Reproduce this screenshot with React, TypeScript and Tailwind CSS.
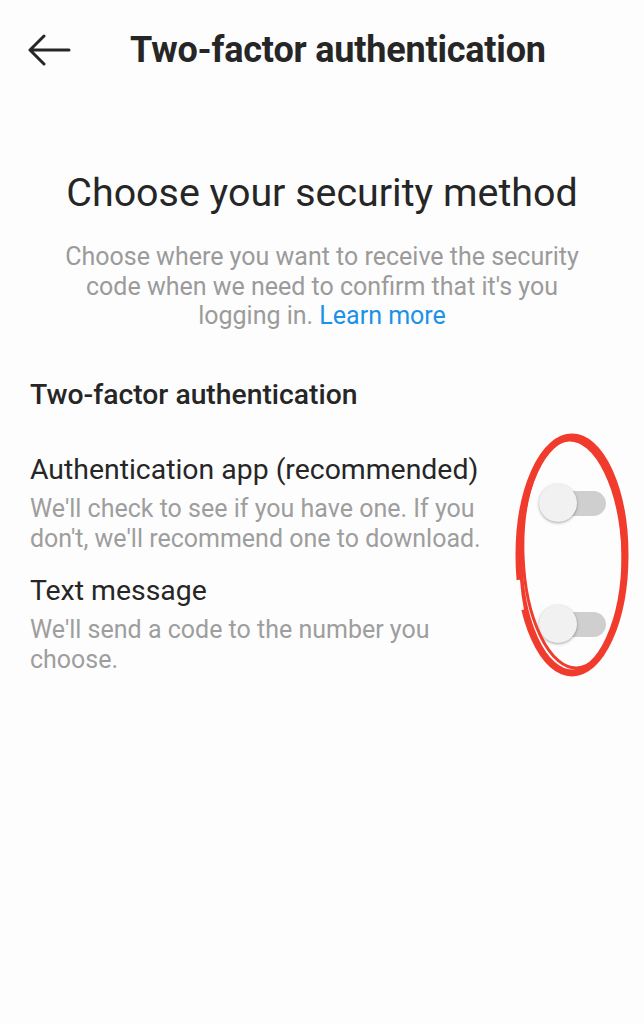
import React from 'react';

const font = { fontFamily: 'Roboto, "Noto Sans", sans-serif' };

const Toggle: React.FC = () => (
  <div className="relative h-[38px] w-[68px] shrink-0">
    <div className="absolute left-[7px] top-[7px] h-[25px] w-[60px] rounded-full bg-[#cfcfcf]" />
    <div className="absolute left-0 top-0 h-[38px] w-[38px] rounded-full bg-[#f1f1f1] shadow-[0_1px_3px_rgba(0,0,0,0.35)]" />
  </div>
);

type Method = { title: string; desc: string };

const methods: Method[] = [
  {
    title: 'Authentication app (recommended)',
    desc: "We'll check to see if you have one. If you don't, we'll recommend one to download.",
  },
  { title: 'Text message', desc: "We'll send a code to the number you choose." },
];

const App: React.FC = () => {
  return (
    <div className="relative min-h-[1024px] w-[644px] bg-[#fdfdfd] text-[#262626]" style={font}>
      <header className="flex h-[100px] items-center pl-[27px]">
        <svg width="44" height="32" viewBox="0 0 44 32" className="shrink-0">
          <path
            d="M42 16H3M17 2L3 16l14 14"
            fill="none"
            stroke="#262626"
            strokeWidth="3"
            strokeLinecap="round"
            strokeLinejoin="round"
          />
        </svg>
        <h1 className="ml-[59px] text-[36px] font-bold leading-[44px] tracking-[-0.2px]">
          Two-factor authentication
        </h1>
      </header>

      <main className="flex flex-col">
        <h2 className="mt-[69px] text-center text-[39.4px] font-normal leading-[48px]">
          Choose your security method
        </h2>
        <p className="mx-auto mt-[25px] w-[520px] text-center text-[25px] leading-[29.5px] text-[#9b9b9b]">
          Choose where you want to receive the security code when we need to confirm that it's you
          logging in. <span className="text-[#1a92e6]">Learn more</span>
        </p>

        <h3 className="mt-[47px] pl-[30px] text-[28.3px] font-medium leading-[34px]">
          Two-factor authentication
        </h3>

        <div className="mt-[41px] flex flex-col gap-[20px] pl-[30px] pr-[37px]">
          {methods.map((m) => (
            <div key={m.title} className="flex items-center justify-between">
              <div className="w-[470px]">
                <div className="text-[28.4px] leading-[34px]">{m.title}</div>
                <div className="mt-[7px] text-[25px] leading-[30px] text-[#9e9e9e]">{m.desc}</div>
              </div>
              <Toggle />
            </div>
          ))}
        </div>
      </main>

      <svg
        className="pointer-events-none absolute left-[510px] top-[430px]"
        width="124"
        height="252"
        viewBox="0 0 124 252"
      >
        <ellipse cx="62" cy="125" rx="53" ry="118" fill="none" stroke="#f13b2c" strokeWidth="7" />
        <ellipse
          cx="63"
          cy="124"
          rx="50"
          ry="114"
          fill="none"
          stroke="#f13b2c"
          strokeWidth="3"
          transform="rotate(-2 63 124)"
        />
        <path d="M8 150 Q9 165 12 180" stroke="#fdfdfd" strokeWidth="4" fill="none" />
      </svg>
    </div>
  );
};

export default App;
